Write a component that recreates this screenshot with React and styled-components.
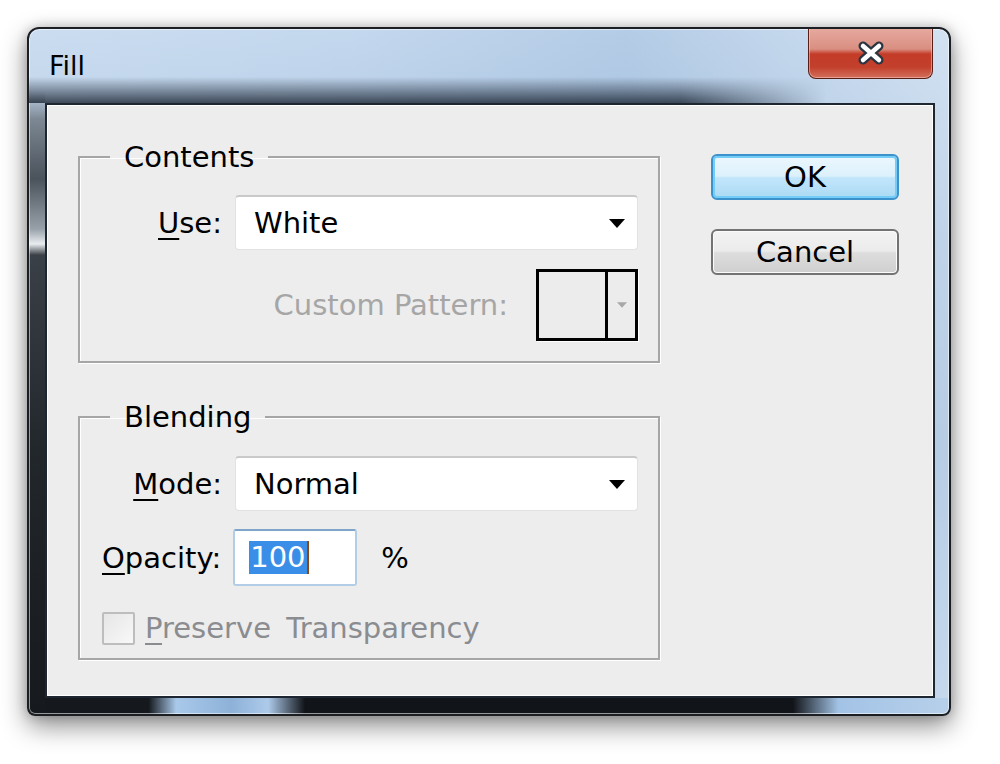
import React from 'react'
import styled, { createGlobalStyle } from 'styled-components'

const GlobalStyle = createGlobalStyle`
  html, body {
    margin: 0;
    background: #fff;
  }
  body {
    font-family: "DejaVu Sans", "Noto Sans", sans-serif;
    color: #000;
  }
`

const Page = styled.div`
  width: 1000px;
  height: 764px;
  box-sizing: border-box;
  padding: 27px 0 0 27px;
`

const Window = styled.div`
  position: relative;
  width: 924px;
  height: 689px;
  box-sizing: border-box;
  display: flex;
  flex-direction: column;
  padding: 0 14px 16px 16px;
  border: 2px solid #1b1f24;
  border-radius: 12px 12px 8px 8px;
  overflow: hidden;
  background:
    linear-gradient(180deg, rgba(0, 0, 0, 0) 0, rgba(0, 0, 0, 0) 62px, #7d8894 90px, #4a525b 150px, #98a1aa 200px, #e9edf0 215px, #3a4047 226px, #22272c 420px, #16191d 100%) left top / 16px 100% no-repeat,
    linear-gradient(90deg, #15191e 0, #15191e 13%, #a9c9ea 16%, #8db1d8 22%, #adcaea 26%, #111418 30%, #111418 83%, #a3c3e6 88%, #b7d0ea 100%) left bottom / 100% 16px no-repeat,
    linear-gradient(90deg, rgba(255, 255, 255, 0.12), rgba(255, 255, 255, 0) 35%, rgba(110, 150, 195, 0.18) 65%, rgba(255, 255, 255, 0.25) 100%),
    linear-gradient(180deg, #c4d8ee 0, #abc5e1 30%, #9fbcdb 60%, #b3cce7 100%);
  box-shadow:
    inset 0 0 0 1px rgba(255, 255, 255, 0.55),
    0 10px 26px rgba(0, 0, 0, 0.45),
    0 0 12px rgba(0, 0, 0, 0.2);
`

const TitleBar = styled.div`
  position: relative;
  height: 74px;
  flex: none;
  display: flex;
  align-items: center;
  justify-content: space-between;
  padding: 0 2px 0 4px;

  &::after {
    content: '';
    position: absolute;
    left: -16px;
    right: 0;
    bottom: 0;
    height: 26px;
    background: linear-gradient(180deg, rgba(40, 55, 72, 0), rgba(28, 38, 52, 0.8));
    -webkit-mask-image: linear-gradient(90deg, #000 0, #000 72%, transparent 88%);
    mask-image: linear-gradient(90deg, #000 0, #000 72%, transparent 88%);
    pointer-events: none;
  }
`

const Title = styled.span`
  font-size: 27px;
  line-height: 1;
  margin-top: -1px;
`

const CloseButton = styled.button`
  align-self: flex-start;
  width: 125px;
  height: 51px;
  margin-top: -1px;
  padding: 0;
  display: flex;
  align-items: center;
  justify-content: center;
  border: 1px solid #5b1e17;
  border-top: none;
  border-radius: 0 0 8px 8px;
  background: linear-gradient(180deg, #e7a99f 0, #d98f82 42%, #c43c28 52%, #c2402c 78%, #d3705c 100%);
  box-shadow: inset 0 0 0 1px rgba(255, 220, 210, 0.45);
`

const Client = styled.div`
  flex: 1;
  position: relative;
  z-index: 1;
  display: grid;
  grid-template-columns: 582px 188px;
  column-gap: 51px;
  align-content: start;
  padding: 33px 0 0 31px;
  border: 2px solid #1d2631;
  background: #ededed;
  box-shadow: inset 0 0 0 1px #fff;
`

const Groups = styled.div`
  display: flex;
  flex-direction: column;
  gap: 35px;
`

const Group = styled.fieldset`
  margin: 0;
  padding: ${p => p.$pad};
  border: 2px solid #a6a6a6;
  box-shadow: 1px 1px 0 #fff, inset 1px 1px 0 #fff;
  display: flex;
  flex-direction: column;
`

const Legend = styled.legend`
  margin-left: 30px;
  padding: 0 14px;
  font-size: 29px;
  line-height: 38px;
`

const FieldRow = styled.div`
  display: grid;
  grid-template-columns: 142px 1fr;
  column-gap: 13px;
  align-items: center;
`

const Label = styled.label`
  text-align: right;
  font-size: 29px;
  color: ${p => (p.$disabled ? '#a6a6a6' : '#000')};

  u {
    text-decoration-thickness: 2px;
    text-underline-offset: 5px;
  }
`

const Select = styled.div`
  height: 55px;
  box-sizing: border-box;
  display: flex;
  align-items: center;
  justify-content: space-between;
  padding: 0 12px 0 18px;
  background: #fff;
  border: 1px solid #e2e2e2;
  border-top: 2px solid #c9c9c9;
  border-radius: 4px;
  font-size: 29px;
`

const PatternRow = styled.div`
  display: flex;
  justify-content: flex-end;
  align-items: center;
  gap: 28px;
  margin-top: 19px;
`

const PatternPicker = styled.div`
  width: 102px;
  height: 72px;
  box-sizing: border-box;
  display: flex;
  border: 3px solid #000;
  box-shadow: 1px 1px 0 #fff;
`

const Swatch = styled.div`
  flex: 1;
  background: #ececec;
`

const PickerArrow = styled.div`
  width: 27px;
  display: flex;
  align-items: center;
  justify-content: center;
  border-left: 3px solid #000;
  background: #ececec;
`

const OpacityRow = styled.div`
  display: flex;
  align-items: center;
  margin-top: 18px;
  padding-left: 22px;
`

const NumberInput = styled.div`
  width: 124px;
  height: 57px;
  box-sizing: border-box;
  margin-left: 12px;
  display: flex;
  align-items: center;
  padding-left: 14px;
  background: #fff;
  border: 2px solid #b3cde6;
  border-top-color: #7fa5ca;
  border-radius: 3px;
  font-size: 29px;
`

const Selected = styled.span`
  background: #3b8ee8;
  color: #fff;
  line-height: 33px;
  padding: 0 1px;
`

const Caret = styled.span`
  width: 2px;
  height: 33px;
  background: #8a4a16;
`

const Unit = styled.span`
  margin-left: 24px;
  font-size: 29px;
`

const CheckRow = styled.div`
  display: flex;
  align-items: center;
  gap: 10px;
  margin-top: 25px;
  padding-left: 22px;
  font-size: 29px;
  color: #8a8c90;
  word-spacing: 6px;

  u {
    text-decoration-thickness: 2px;
    text-underline-offset: 5px;
  }
`

const Checkbox = styled.span`
  width: 33px;
  height: 33px;
  box-sizing: border-box;
  border: 2px solid #bdbdbd;
  border-radius: 2px;
  background: linear-gradient(135deg, #e6e6e6, #f8f8f8);
`

const Buttons = styled.div`
  display: flex;
  flex-direction: column;
  gap: 29px;
  padding-top: 16px;
`

const DialogButton = styled.button`
  height: 46px;
  padding: 0;
  font-family: inherit;
  font-size: 29px;
  color: #000;
  border-radius: 6px;
  border: 2px solid ${p => (p.$default ? '#3c93cc' : '#737373')};
  background: ${p =>
    p.$default
      ? 'linear-gradient(180deg, #ecf7fd 0, #dcf1fc 48%, #c1e6fb 52%, #abdaf4 100%)'
      : 'linear-gradient(180deg, #f3f3f3 0, #ebebeb 48%, #dddddd 52%, #cfcfcf 100%)'};
  box-shadow: ${p =>
    p.$default ? 'inset 0 0 0 2px #74cdf6' : 'inset 0 0 0 1px #fbfbfb'};
`

const Arrow = ({ color = '#000', w = 16, h = 9 }) => (
  <svg width={w} height={h} viewBox="0 0 16 9">
    <polygon points="0,0 16,0 8,9" fill={color} />
  </svg>
)

export default function App() {
  return (
    <Page>
      <GlobalStyle />
      <Window>
        <TitleBar>
          <Title>Fill</Title>
          <CloseButton aria-label="Close">
            <svg width="40" height="32" viewBox="0 0 40 32">
              <path d="M12 9 L28 23 M28 9 L12 23" stroke="#2b3440" strokeWidth="9" strokeLinecap="round" />
              <path d="M12 9 L28 23 M28 9 L12 23" stroke="#fff" strokeWidth="4.5" strokeLinecap="round" />
            </svg>
          </CloseButton>
        </TitleBar>
        <Client>
          <Groups>
            <Group $pad="19px 20px 20px 0">
              <Legend>Contents</Legend>
              <FieldRow>
                <Label><u>U</u>se:</Label>
                <Select>
                  White
                  <Arrow />
                </Select>
              </FieldRow>
              <PatternRow>
                <Label $disabled>Custom Pattern:</Label>
                <PatternPicker>
                  <Swatch />
                  <PickerArrow>
                    <Arrow color="#a8a8a8" w={10} h={6} />
                  </PickerArrow>
                </PatternPicker>
              </PatternRow>
            </Group>
            <Group $pad="20px 20px 13px 0">
              <Legend>Blending</Legend>
              <FieldRow>
                <Label><u>M</u>ode:</Label>
                <Select>
                  Normal
                  <Arrow />
                </Select>
              </FieldRow>
              <OpacityRow>
                <Label><u>O</u>pacity:</Label>
                <NumberInput>
                  <Selected>100</Selected>
                  <Caret />
                </NumberInput>
                <Unit>%</Unit>
              </OpacityRow>
              <CheckRow>
                <Checkbox />
                <span><u>P</u>reserve Transparency</span>
              </CheckRow>
            </Group>
          </Groups>
          <Buttons>
            <DialogButton $default>OK</DialogButton>
            <DialogButton>Cancel</DialogButton>
          </Buttons>
        </Client>
      </Window>
    </Page>
  )
}
